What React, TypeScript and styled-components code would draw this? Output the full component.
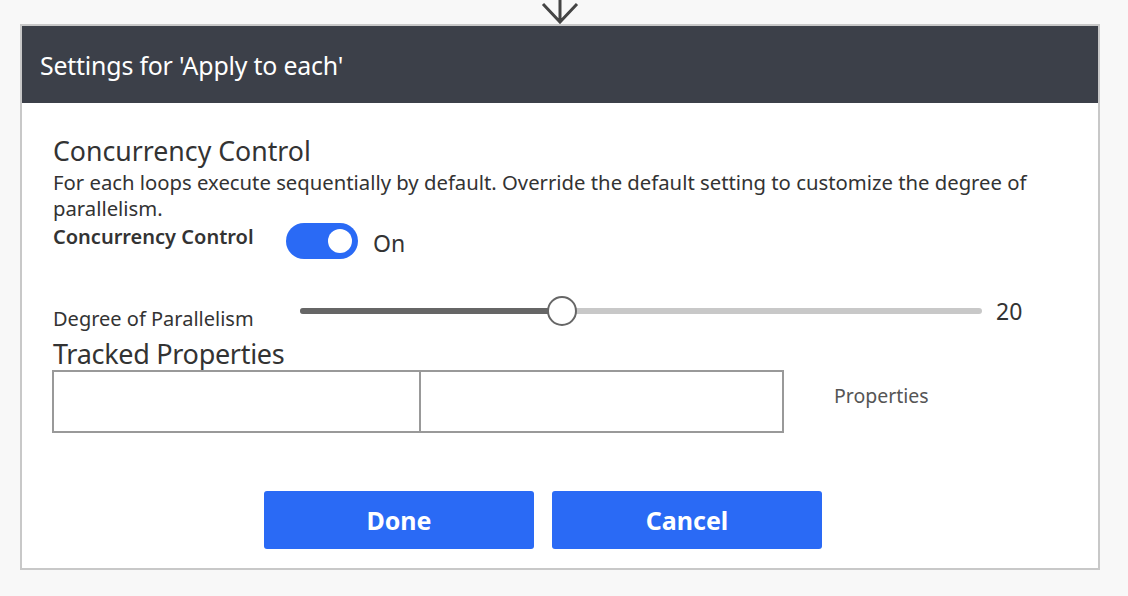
import React from "react";
import styled, { createGlobalStyle } from "styled-components";

const GlobalStyle = createGlobalStyle`
  html, body {
    margin: 0;
    padding: 0;
    background: #f8f8f8;
    font-family: "Noto Sans", "Open Sans", sans-serif;
    color: #333;
  }
`;

const Page = styled.div`
  width: 1128px;
  height: 596px;
  display: flex;
  flex-direction: column;
  align-items: flex-start;
  padding-left: 20px;
  box-sizing: border-box;
  overflow: hidden;
`;

const ArrowWrap = styled.div`
  width: 1080px;
  height: 24px;
  display: flex;
  justify-content: center;
`;

const Panel = styled.div`
  width: 1080px;
  border: 2px solid #c8c8c8;
  box-sizing: border-box;
  background: #fff;
`;

const Header = styled.div`
  height: 77px;
  background: #3c4049;
  display: flex;
  align-items: center;
  padding-left: 18px;
  box-sizing: border-box;
`;

const HeaderTitle = styled.h1`
  margin: 0;
  font-size: 24.9px;
  font-weight: 400;
  color: #fff;
  letter-spacing: -0.2px;
`;

const Body = styled.div`
  padding: 32px 30px 19px 31px;
  display: flex;
  flex-direction: column;
`;

const SectionTitle = styled.h2`
  margin: 0;
  font-size: 26.7px;
  font-weight: 400;
  line-height: 32px;
  color: #333;
`;

const Description = styled.p`
  margin: 2px 0 0;
  font-size: 20.3px;
  line-height: 26px;
  color: #333;
  max-width: 1000px;
`;

const ToggleRow = styled.div`
  display: flex;
  align-items: flex-start;
  margin-top: 2px;
`;

const FieldLabel = styled.span<{ $bold?: boolean }>`
  width: 233px;
  font-size: 20px;
  font-weight: ${(p) => (p.$bold ? 600 : 400)};
  color: #333;
  line-height: 28px;
`;

const Toggle = styled.div<{ $on: boolean }>`
  width: 72px;
  height: 36px;
  border-radius: 18px;
  background: ${(p) => (p.$on ? "#2a6af5" : "#c8c8c8")};
  position: relative;
  flex-shrink: 0;
  &::after {
    content: "";
    position: absolute;
    top: 6px;
    left: ${(p) => (p.$on ? "42px" : "6px")};
    width: 24px;
    height: 24px;
    border-radius: 50%;
    background: #fff;
  }
`;

const ToggleText = styled.span`
  margin-left: 15px;
  font-size: 23px;
  line-height: 40px;
  color: #333;
`;

const SliderRow = styled.div`
  display: flex;
  align-items: center;
  margin-top: 28px;
  height: 40px;
`;

const SliderLabel = styled(FieldLabel)`
  width: 247px;
  align-self: flex-end;
  line-height: 22px;
  margin-bottom: 1px;
`;

const Track = styled.div`
  width: 682px;
  height: 6px;
  border-radius: 3px;
  background: #c8c8c8;
  position: relative;
`;

const Fill = styled.div`
  height: 100%;
  border-radius: 3px;
  background: #666;
`;

const Thumb = styled.div`
  position: absolute;
  top: 50%;
  width: 26px;
  height: 26px;
  margin: -15px 0 0 -15px;
  border-radius: 50%;
  border: 2px solid #666;
  background: #fff;
`;

const SliderValue = styled.span`
  margin-left: 14px;
  font-size: 23px;
  color: #333;
`;

const TrackedTitle = styled(SectionTitle)`
  margin-top: 7px;
  font-size: 27px;
  line-height: 32px;
  letter-spacing: -0.3px;
`;

const TrackedRow = styled.div`
  display: flex;
  align-items: center;
`;

const PropTable = styled.div`
  width: 732px;
  height: 63px;
  margin-left: -1px;
  border: 2px solid #999;
  box-sizing: border-box;
  display: grid;
  grid-template-columns: 365px 1fr;
`;

const PropCell = styled.div`
  & + & {
    border-left: 2px solid #999;
  }
`;

const PropLabel = styled.span`
  margin: 0 0 12px 50px;
  font-size: 19.5px;
  color: #555;
`;

const Actions = styled.div`
  display: flex;
  justify-content: flex-start;
  gap: 18px;
  margin-top: 58px;
  padding-left: 211px;
`;

const Button = styled.button`
  width: 270px;
  height: 58px;
  border: none;
  border-radius: 3px;
  background: #2a6af5;
  color: #fff;
  font-family: "Noto Sans", "Open Sans", sans-serif;
  font-size: 25px;
  font-weight: 700;
  cursor: pointer;
`;

const DownArrow = () => (
  <svg width="40" height="24" viewBox="0 0 40 24">
    <path d="M20 0 V22 M3 4 L20 22 L37 4" fill="none" stroke="#444" strokeWidth="3" />
  </svg>
);

export default function App() {
  const value = 20;
  const max = 52;
  const pct = (value / max) * 100;
  return (
    <>
      <GlobalStyle />
      <Page>
        <ArrowWrap>
          <DownArrow />
        </ArrowWrap>
        <Panel>
          <Header>
            <HeaderTitle>Settings for 'Apply to each'</HeaderTitle>
          </Header>
          <Body>
            <SectionTitle>Concurrency Control</SectionTitle>
            <Description>
              For each loops execute sequentially by default. Override the default setting to customize the degree of
              parallelism.
            </Description>
            <ToggleRow>
              <FieldLabel $bold>Concurrency Control</FieldLabel>
              <Toggle $on />
              <ToggleText>On</ToggleText>
            </ToggleRow>
            <SliderRow>
              <SliderLabel>Degree of Parallelism</SliderLabel>
              <Track>
                <Fill style={{ width: `${pct}%` }} />
                <Thumb style={{ left: `${pct}%` }} />
              </Track>
              <SliderValue>{value}</SliderValue>
            </SliderRow>
            <TrackedTitle>Tracked Properties</TrackedTitle>
            <TrackedRow>
              <PropTable>
                <PropCell />
                <PropCell />
              </PropTable>
              <PropLabel>Properties</PropLabel>
            </TrackedRow>
            <Actions>
              <Button>Done</Button>
              <Button>Cancel</Button>
            </Actions>
          </Body>
        </Panel>
      </Page>
    </>
  );
}
